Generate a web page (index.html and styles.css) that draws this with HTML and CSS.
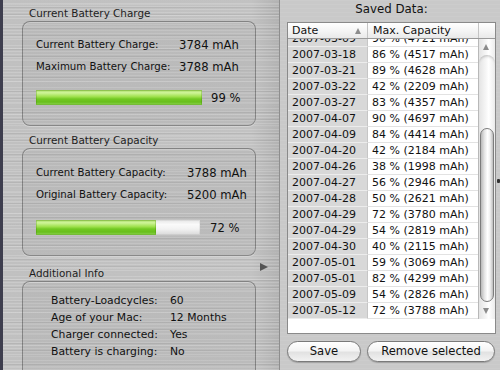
FILE: index.html
```html
<!DOCTYPE html>
<html>
<head>
<meta charset="utf-8">
<link rel="stylesheet" href="styles.css">
</head>
<body>
<div class="window">
  <div class="edge"></div>
  <div class="main">
    <div class="glabel">Current Battery Charge</div>
    <div class="group g1">
      <div class="kv kv1">
        <span>Current Battery Charge:</span><span class="val">3784 mAh</span>
        <span>Maximum Battery Charge:</span><span class="val">3788 mAh</span>
      </div>
      <div class="barrow">
        <div class="bar b1"><div class="fill" style="width:100%"></div></div>
        <span class="pct">99 %</span>
      </div>
    </div>

    <div class="glabel l2">Current Battery Capacity</div>
    <div class="group g2">
      <div class="kv kv2">
        <span>Current Battery Capacity:</span><span class="val">3788 mAh</span>
        <span>Original Battery Capacity:</span><span class="val">5200 mAh</span>
      </div>
      <div class="barrow">
        <div class="bar b2"><div class="fill" style="width:73%"></div></div>
        <span class="pct">72 %</span>
      </div>
    </div>

    <div class="glabel l3"><span>Additional Info</span><span class="tri"></span></div>
    <div class="group g3">
      <div class="kv kv3">
        <span>Battery-Loadcycles:</span><span>60</span>
        <span>Age of your Mac:</span><span>12 Months</span>
        <span>Charger connected:</span><span>Yes</span>
        <span>Battery is charging:</span><span>No</span>
      </div>
    </div>
  </div>

  <div class="drawer">
    <div class="dtitle">Saved Data:</div>
    <div class="table">
      <div class="thead">
        <div class="th th-date">Date<span class="sort"></span></div>
        <div class="th th-cap">Max. Capacity</div>
        <div class="th th-x"></div>
      </div>
      <div class="tbody">
        <div class="rowsclip">
          <div class="rows">
            <div class="tr"><span class="td-date">2007-03-09</span><span class="td-cap">90 % (4721 mAh)</span></div>
            <div class="tr"><span class="td-date">2007-03-18</span><span class="td-cap">86 % (4517 mAh)</span></div>
            <div class="tr"><span class="td-date">2007-03-21</span><span class="td-cap">89 % (4628 mAh)</span></div>
            <div class="tr"><span class="td-date">2007-03-22</span><span class="td-cap">42 % (2209 mAh)</span></div>
            <div class="tr"><span class="td-date">2007-03-27</span><span class="td-cap">83 % (4357 mAh)</span></div>
            <div class="tr"><span class="td-date">2007-04-07</span><span class="td-cap">90 % (4697 mAh)</span></div>
            <div class="tr"><span class="td-date">2007-04-09</span><span class="td-cap">84 % (4414 mAh)</span></div>
            <div class="tr"><span class="td-date">2007-04-20</span><span class="td-cap">42 % (2184 mAh)</span></div>
            <div class="tr"><span class="td-date">2007-04-26</span><span class="td-cap">38 % (1998 mAh)</span></div>
            <div class="tr"><span class="td-date">2007-04-27</span><span class="td-cap">56 % (2946 mAh)</span></div>
            <div class="tr"><span class="td-date">2007-04-28</span><span class="td-cap">50 % (2621 mAh)</span></div>
            <div class="tr"><span class="td-date">2007-04-29</span><span class="td-cap">72 % (3780 mAh)</span></div>
            <div class="tr"><span class="td-date">2007-04-29</span><span class="td-cap">54 % (2819 mAh)</span></div>
            <div class="tr"><span class="td-date">2007-04-30</span><span class="td-cap">40 % (2115 mAh)</span></div>
            <div class="tr"><span class="td-date">2007-05-01</span><span class="td-cap">59 % (3069 mAh)</span></div>
            <div class="tr"><span class="td-date">2007-05-01</span><span class="td-cap">82 % (4299 mAh)</span></div>
            <div class="tr"><span class="td-date">2007-05-09</span><span class="td-cap">54 % (2826 mAh)</span></div>
            <div class="tr"><span class="td-date">2007-05-12</span><span class="td-cap">72 % (3788 mAh)</span></div>
          </div>
        </div>
        <div class="scroll">
          <div class="arrow up"></div>
          <div class="track">
            <div class="thumb"></div>
          </div>
          <div class="arrow down"></div>
        </div>
      </div>
    </div>
    <div class="buttons">
      <div class="btn save">Save</div>
      <div class="btn remove">Remove selected</div>
    </div>
  </div>
  <div class="grip"></div>
</div>
</body>
</html>
```

FILE: styles.css
```css
html, body {
  margin: 0;
  padding: 0;
}
body {
  width: 500px;
  height: 370px;
  overflow: hidden;
  font-family: "DejaVu Sans", "Liberation Sans", sans-serif;
  color: #111;
  background: #bebebe;
}
.window {
  display: flex;
  height: 370px;
  position: relative;
}
.edge {
  width: 3px;
  background: #3e3e4e;
}
.main {
  width: 276px;
  box-sizing: border-box;
  padding: 6px 23px 0 19px;
  background:
    repeating-linear-gradient(180deg, rgba(255,255,255,0.16) 0 1px, transparent 1px 3px),
    repeating-linear-gradient(180deg, rgba(0,0,0,0.06) 0 1px, transparent 1px 7px),
    repeating-linear-gradient(180deg, transparent 0 4px, rgba(255,255,255,0.12) 4px 5px, transparent 5px 11px),
    linear-gradient(90deg, #c0c0c0 0, #c2c2c2 90%, #b2b2b2 100%);
  overflow: hidden;
}
.glabel {
  font-size: 10.4px;
  line-height: 14px;
  height: 14px;
  padding-left: 7px;
  color: #1e1e1e;
  display: flex;
  justify-content: space-between;
  align-items: flex-start;
}
.l2 { margin-top: 7px; }
.l3 { margin-top: 10px; margin-right: -12px; }
.tri {
  width: 0;
  height: 0;
  border-left: 8px solid #555;
  border-top: 4.5px solid transparent;
  border-bottom: 4.5px solid transparent;
  margin-top: -3px;
}
.group {
  margin-top: 1px;
  border: 1px solid rgba(0,0,0,0.30);
  border-radius: 8px;
  background: rgba(0,0,0,0.035);
  box-shadow: inset 0 1px 0 rgba(255,255,255,0.25), 0 1px 0 rgba(255,255,255,0.3);
  padding-left: 13px;
}
.g1 { height: 105px; box-sizing: border-box; padding-top: 12px; }
.g2 { height: 108px; box-sizing: border-box; padding-top: 13px; }
.g3 { height: 110px; box-sizing: border-box; padding-top: 10px; padding-left: 28px; }
.kv {
  display: grid;
  font-size: 10.2px;
  line-height: 22px;
}
.kv1 { grid-template-columns: 143px auto; }
.kv2 { grid-template-columns: 151px auto; }
.kv3 { grid-template-columns: 119px auto; line-height: 17px; font-size: 10.8px; }
.val { font-size: 11.6px; }
.barrow {
  display: flex;
  align-items: center;
  margin-top: 12px;
}
.g2 .barrow { margin-top: 14px; }
.bar {
  height: 15px;
  background: linear-gradient(180deg, #e6e6e6 0, #fafafa 30%, #f2f2f2 60%, #d8d8d8 100%);
  box-shadow: inset 0 0 0 1px rgba(0,0,0,0.06);
}
.b1 { width: 166px; }
.b2 { width: 164px; }
.fill {
  height: 100%;
  background: linear-gradient(180deg, #a4d862 0, #d0f59a 18%, #9ee04c 45%, #72c823 60%, #68be1c 80%, #8fd653 100%);
  box-shadow: inset 0 0 0 1px rgba(60,120,0,0.25);
}
.pct {
  font-size: 11.6px;
  margin-left: 9px;
}
.b2 + .pct { margin-left: 10px; }

/* drawer */
.drawer {
  flex: 1;
  border-left: 1px solid #8e8e8e;
  background:
    repeating-linear-gradient(180deg, rgba(255,255,255,0.06) 0 1px, transparent 1px 4px),
    #c9c9c9;
  padding: 0 4px 0 7px;
  display: flex;
  flex-direction: column;
}
.dtitle {
  text-align: center;
  font-size: 11.8px;
  line-height: 18px;
  height: 18px;
  color: #111;
}
.table {
  margin-top: 4px;
  height: 312px;
  box-sizing: border-box;
  border: 1px solid #8a8a8a;
  background: #fff;
  display: flex;
  flex-direction: column;
}
.thead {
  display: grid;
  grid-template-columns: 80px 111px 1fr;
  height: 16px;
  box-sizing: border-box;
  border-bottom: 1px solid #9a9a9a;
  background: linear-gradient(180deg, #ffffff 0, #f4f4f4 55%, #e9e9e9 100%);
  font-size: 11px;
  line-height: 15px;
}
.th {
  border-right: 1px solid #c4c4c4;
  position: relative;
}
.th-date { padding-left: 4px; }
.th-cap { padding-left: 5px; }
.th-x { border-right: none; }
.sort {
  position: absolute;
  right: 6px;
  top: 5px;
  width: 0;
  height: 0;
  border-bottom: 6px solid #8c8c8c;
  border-left: 3.5px solid transparent;
  border-right: 3.5px solid transparent;
}
.tbody {
  flex: 1;
  display: flex;
  min-height: 0;
}
.rowsclip {
  flex: 1;
  overflow: hidden;
  background: #fff;
}
.rows {
  margin-top: -8px;
}
.tr {
  display: grid;
  grid-template-columns: 80px 1fr;
  height: 16px;
  font-size: 11px;
  line-height: 16px;
}
.td-date {
  background: #d8d8d8;
  padding-left: 4px;
  border-bottom: 1px solid #ececec;
  border-right: 1px solid #c6c6c6;
  box-sizing: border-box;
  line-height: 15px;
}
.td-cap {
  padding-left: 4px;
  border-bottom: 1px solid #e2e2e2;
  box-sizing: border-box;
  line-height: 15px;
}
.scroll {
  width: 16px;
  border-left: 1px solid #b8b8b8;
  display: flex;
  flex-direction: column;
  margin-bottom: 14px;
  background: linear-gradient(90deg, #e4e4e4 0, #f7f7f7 45%, #ffffff 60%, #ececec 100%);
}
.arrow {
  height: 16px;
  position: relative;
  flex: none;
}
.arrow::after {
  content: "";
  position: absolute;
  left: 4px;
  width: 0;
  height: 0;
  border-left: 3.5px solid transparent;
  border-right: 3.5px solid transparent;
}
.up::after {
  top: 5px;
  border-bottom: 6px solid #8c8c8c;
}
.down::after {
  top: 5px;
  border-top: 6px solid #8c8c8c;
}
.track {
  flex: 1;
  border-radius: 8px 8px 0 0;
  box-shadow: inset 0 3px 3px -2px rgba(0,0,0,0.25);
  padding: 0 1px;
}
.thumb {
  margin-top: 73px;
  height: 174px;
  box-sizing: border-box;
  border: 1px solid #7c7c7c;
  border-radius: 7px;
  background: linear-gradient(90deg, #b8b8b8 0, #e6e6e6 30%, #ffffff 55%, #f0f0f0 75%, #bcbcbc 100%);
}
.buttons {
  display: flex;
  gap: 6px;
  margin-top: 7px;
}
.btn {
  height: 21px;
  box-sizing: border-box;
  border: 1px solid #7a7a7a;
  border-radius: 11px;
  background: linear-gradient(180deg, #ffffff 0, #f4f4f4 45%, #e2e2e2 55%, #f2f2f2 100%);
  font-size: 11.6px;
  line-height: 19px;
  text-align: center;
  color: #111;
  box-shadow: 0 1px 1px rgba(0,0,0,0.2);
}
.save { width: 74px; }
.remove { width: 128px; }
.grip {
  position: absolute;
  right: 0;
  top: 179px;
  width: 3px;
  height: 4px;
  background: #333;
  border-radius: 1px;
}
```
